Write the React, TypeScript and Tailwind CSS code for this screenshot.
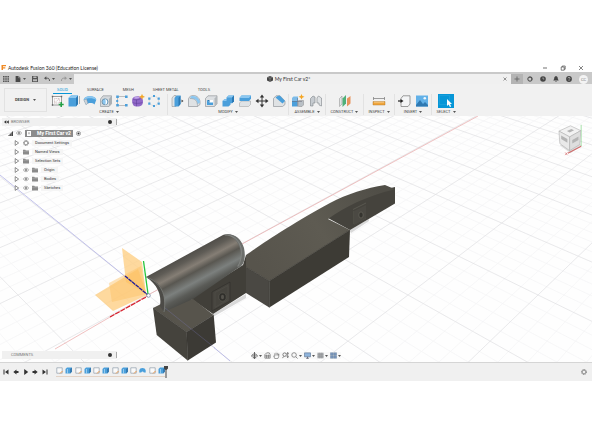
import type { ReactNode } from "react";

type IconProps = { className?: string };

const BLUE = "#4a9fdb";
const LIGHT = "#8cc7f0";

function Svg({ children, className = "size-3.5", box = "0 0 14 14" }: { children: ReactNode; className?: string; box?: string }) {
  return (
    <svg viewBox={box} className={`shrink-0 ${className}`} fill="none" aria-hidden="true">
      {children}
    </svg>
  );
}

/* ---- ribbon icons ---- */

const SketchIcon = () => (
  <Svg>
    <rect x="1.5" y="2.5" width="9" height="8.5" fill="#fafafa" stroke="#777" strokeWidth=".7" />
    <path d="M3.5 4.5h5v4.5h-5z M3.5 9l5-4.5" stroke="#a88" strokeWidth=".5" strokeDasharray="1 .7" />
    <path d="M.8 1.8h1.4v1.4H.8z M9.8 1.8h1.4v1.4H9.8z M.8 10.3h1.4v1.4H.8z" fill="#666" />
    <path d="M10.2 8v5 M7.7 10.5h5" stroke="#22a045" strokeWidth="1.6" />
  </Svg>
);
const ExtrudeIcon = () => (
  <Svg>
    <path d="M1.5 4l2.5-2.5h7V10L9 12.5H1.5z" fill={BLUE} />
    <path d="M1.5 4L4 1.5h7L9 4z" fill={LIGHT} />
    <path d="M9 4l2-2.5V10l-2 2.5z" fill="#2b79b4" />
    <path d="M12.5 2v8" stroke="#888" strokeWidth=".6" />
  </Svg>
);
const RevolveIcon = () => (
  <Svg>
    <path d="M.8 6c0-5 12.4-5 12.4 0l-1.7 4.5c-2-2-6.5-2-8.5.3z" fill={BLUE} />
    <path d="M.8 6c0-5 12.4-5 12.4 0-3-2.5-9.5-2.5-12.4 0z" fill={LIGHT} />
    <path d="M.8 6l2.2 4.800 1.800-1.500L3.500 5z" fill="#d0d5da" stroke="#888" strokeWidth=".3" />
  </Svg>
);
const HoleIcon = () => (
  <Svg>
    <path d="M1.5 5L4 1.8h8.5v8L10 12.5H1.5z" fill="#d5d9dc" stroke="#8a8f93" strokeWidth=".6" />
    <path d="M10 5l2.5-3.2v8L10 12.5z" fill="#aab0b5" />
    <circle cx="6" cy="7.8" r="3" fill={LIGHT} stroke="#5f7f95" strokeWidth=".7" />
    <path d="M6 5a3 3 0 010 5.8c1-1.8 1-4 0-5.8z" fill="#fff" />
  </Svg>
);
const PatternIcon = () => (
  <Svg>
    <path d="M11 2.5H2.500v9H11" stroke="#888" strokeWidth=".5" />
    <path d="M1.200 1.500h2.600v2.400H1.200zM1.200 10h2.600v2.400H1.200zM10 1.500h2.600v2.400H10zM10 10h2.600v2.400H10zM1.200 6h2v2h-2z" fill={BLUE} />
  </Svg>
);
const FormIcon = () => (
  <Svg>
    <path d="M1.5 4.5C3 2 8 1.5 10 3.5c2.5 1 2.5 5.5 1 7.5-2 2-7 2-8.5.5C1 9.500.8 6 1.500 4.500z" fill="#9068c8" />
    <path d="M1.8 5c2 1.2 5.5 1.2 7.7-.3M5.5 5.7v6.5M1.5 8.6c2.5 1 7 1 10 0" stroke="#5b3a94" strokeWidth=".5" />
    <path d="M2.5 4.3c2-1.6 5-1.9 6.5-.8-2 1.3-4.5 1.5-6.5.8z" fill="#c2a6e8" />
    <path d="M11 .5l.7 1.6 1.7.7-1.7.7-.7 1.6-.7-1.6-1.7-.7 1.7-.7z" fill="#f5a623" stroke="#f5a623" strokeWidth=".5" />
  </Svg>
);
const CircularIcon = () => (
  <Svg>
    <circle cx="7" cy="7" r="4.7" stroke="#999" strokeWidth=".4" strokeDasharray="1 1" />
    <path d="M6 1h2v2H6zM6 11h2v2H6zM1.200 3.500h2.200v2.200H1.200zM1.200 8.500h2.200v2.200H1.200zM10.600 3.500h2.200v2.200h-2.200zM10.600 8.500h2.200v2.200h-2.200z" fill={BLUE} />
  </Svg>
);
const PressPullIcon = () => (
  <Svg>
    <path d="M2 4l2-2.500h2V12.500H2z" fill="#dfe3e6" stroke="#888" strokeWidth=".5" />
    <path d="M4.500 4l2-2.500h4V10l-2 2.500h-4z" fill={BLUE} />
    <path d="M8.500 4l2-2.500V10l-2 2.500z" fill="#2b79b4" />
    <path d="M11.500 5.500L13.500 7l-2 1.500z" fill="#444" />
  </Svg>
);
const FilletIcon = () => (
  <Svg>
    <path d="M1.500 12.500V5C2 2.500 4 1.500 6.500 1.500 10 1.500 13 4.500 13 8v2.500l-2.500 2z" fill="#dfe2e4" stroke="#858a8e" strokeWidth=".6" />
    <path d="M4 2.300C9 .8 13 5 13 8.500l-2.500 1.800C10.500 6 8 4.500 3 4.500z" fill={LIGHT} />
    <path d="M3 4.500c5 0 7.500 2 7.500 8" stroke="#8a8f93" strokeWidth=".5" />
  </Svg>
);
const ShellIcon = () => (
  <Svg>
    <path d="M1.500 4.500L4 1.800h9v8l-2.500 2.700h-9z" fill="#dde0e3" stroke="#858a8e" strokeWidth=".6" />
    <path d="M10.500 4.500L13 1.800v8l-2.500 2.700z" fill="#b4b9bd" />
    <path d="M3 6h6v5H3z" fill="#fff" />
    <path d="M3 6l2.500 2.500V11H3zM5.500 8.500H9V11H5.500z" fill={BLUE} />
    <path d="M3 6h2.500v2.500z" fill="#2b79b4" />
  </Svg>
);
const CombineIcon = () => (
  <Svg>
    <path d="M1.500 7l2-1.800h2V3.500l2-2h5.500v5.700l-2 2H9.500v1.500l-2 1.800h-6z" fill={BLUE} />
    <path d="M5.500 3.500l2-2H13l-2 2z M1.500 7l2-1.800h2V7z" fill={LIGHT} />
    <path d="M11 3.500l2-2v5.700l-2 2z" fill="#2b79b4" />
  </Svg>
);
const SplitIcon = () => (
  <Svg>
    <path d="M1.500 9l2-2h9v3.500l-2 2h-9z" fill="#dfe3e6" stroke="#888" strokeWidth=".4" />
    <path d="M1.500 4l2-2.500h9.500v3.300l-2 2.200H1.500z" fill={BLUE} />
    <path d="M1.500 4l2-2.500h9.500l-2 2.500z" fill={LIGHT} />
  </Svg>
);
const MoveIcon = () => (
  <Svg>
    <path d="M7 2v10M2 7h10" stroke="#333" strokeWidth="1" />
    <path d="M7 .5L9.200 3.500H4.800zM7 13.500l2.200-3H4.800zM.5 7l3-2.200v4.400zM13.500 7l-3-2.200v4.400z" fill="#333" />
  </Svg>
);
const ChamferIcon = () => (
  <Svg>
    <path d="M1.500 12.500V4.500L4 1.800h4L13 7v3.500l-2.500 2z" fill="#dfe2e4" stroke="#858a8e" strokeWidth=".6" />
    <path d="M3.500 3.500L6 1.800h2L13 7l-2.500 2.500z" fill={BLUE} />
  </Svg>
);
const ComponentIcon = () => (
  <Svg>
    <path d="M1 4l1.500-1.500H7V7H1z" fill="#7dbbe8" />
    <path d="M1 7h5.500v5.500H1z" fill={BLUE} />
    <path d="M7.500 6.500h5V11L11 12.500H7.500z" fill="#b9c0c6" stroke="#777" strokeWidth=".4" />
    <path d="M6.500 4v8.500M1 7.500h10" stroke="#667" strokeWidth=".5" />
    <path d="M10.500 0l.9 1.900 2.100.9-2.100.9-.9 1.900-.9-1.900-2.100-.9 2.100-.9z" fill="#f5a623" />
  </Svg>
);
const JointIcon = () => (
  <Svg>
    <path d="M1.500 12V4.500L4 2l2 1v6H4v3z" fill="#c6cbd0" stroke="#7d8388" strokeWidth=".6" />
    <path d="M12.500 12V4L9.500 2 8 4v5h2v2z" fill="#dfe2e4" stroke="#7d8388" strokeWidth=".6" />
  </Svg>
);
const PlaneIcon = () => (
  <Svg>
    <path d="M1.500 4.500L4 2v8l-2.500 2.500z" fill="#e2e5e7" stroke="#888" strokeWidth=".5" />
    <path d="M4.500 4.500L8 1v8.500l-3.500 3.500z" fill="#4fb079" />
    <path d="M9 4.500L12.500 2v7.500L9 12.500z" fill="#e8935c" />
  </Svg>
);
const MeasureIcon = () => (
  <Svg>
    <path d="M1.500 4.500h11M1.500 3v3M12.500 3v3" stroke="#777" strokeWidth=".7" />
    <path d="M1 7.500h12v3.500H1z" fill="#f0a63c" stroke="#a66d1a" strokeWidth=".4" />
    <path d="M3 7.500V9m2-1.500V9m2-1.500V9m2-1.500V9m2-1.500V9" stroke="#fff" strokeWidth=".5" />
  </Svg>
);
const DeriveIcon = () => (
  <Svg>
    <path d="M4 4.500L6 1.800h7v8.200l-2 2.500H4z" fill="#f4f5f6" stroke="#777" strokeWidth=".7" />
    <path d="M1 7h3" stroke="#222" strokeWidth="1.200" />
    <path d="M3.500 5L6.500 7l-3 2z" fill="#222" />
  </Svg>
);
const ImageIcon = () => (
  <Svg>
    <path d="M1 1.500h12v11H1z" fill="#62b1e8" />
    <path d="M1 11l4-5 3 4 2-2 3 3v1.500H1z" fill="#2f79b2" />
    <circle cx="9.800" cy="4.300" r="1.300" fill="#eef7fd" />
  </Svg>
);
const SelectIcon = () => (
  <Svg className="h-3.5 w-4" box="0 0 16 14">
    <path d="M0 0h16v14H0z" fill="#0696d7" />
    <path d="M1.500 1.500h10v9h-10z" stroke="#4fb6e6" strokeWidth=".5" strokeDasharray="1 1" />
    <path d="M9 5v7l1.700-1.400 1.200 2.500 1.300-.6-1.200-2.500h2z" fill="#fff" />
  </Svg>
);

const groups = [
  { name: "CREATE", size: "w-[117px]", pad: "pr-1.5", icons: [SketchIcon, ExtrudeIcon, RevolveIcon, HoleIcon, PatternIcon, FormIcon, CircularIcon] },
  { name: "MODIFY", size: "w-[121px]", pad: "px-0.5", icons: [PressPullIcon, FilletIcon, ShellIcon, CombineIcon, SplitIcon, MoveIcon, ChamferIcon] },
  { name: "ASSEMBLE", size: "w-[37px]", pad: "px-0.5", icons: [ComponentIcon, JointIcon] },
  { name: "CONSTRUCT", size: "w-[38px]", pad: "px-0.5", icons: [PlaneIcon] },
  { name: "INSPECT", size: "w-[31px]", pad: "px-0.5", icons: [MeasureIcon] },
  { name: "INSERT", size: "w-[37px]", pad: "px-0.5", icons: [DeriveIcon, ImageIcon] },
  { name: "SELECT", size: "w-[28px]", pad: "px-0.5", icons: [SelectIcon] },
];

/* ---- small icons ---- */

function Caret() {
  return (
    <Svg className="h-0.5 w-[3px]" box="0 0 3 2">
      <path d="M0 0h3L1.500 2z" fill="#555" />
    </Svg>
  );
}

const GridIcon = () => (
  <Svg className="size-1.5" box="0 0 6 6">
    <path d="M0 0h1.600v1.600H0zM2.200 0h1.600v1.600H2.200zM4.400 0H6v1.600H4.400zM0 2.200h1.600v1.600H0zM2.200 2.200h1.600v1.600H2.200zM4.400 2.200H6v1.600H4.400zM0 4.400h1.600V6H0zM2.200 4.400h1.600V6H2.200zM4.400 4.400H6V6H4.400z" fill="#555" />
  </Svg>
);
const FileIcon = () => (
  <Svg className="size-1.5" box="0 0 6 6">
    <path d="M.6 0h3l1.800 1.800V6H.6z" fill="#4a4a4a" />
    <path d="M3.600 0v1.800h1.800" stroke="#ccc" strokeWidth=".4" />
  </Svg>
);
const SaveIcon = () => (
  <Svg className="size-1.5" box="0 0 6 6">
    <path d="M0 0h5.300l.7.700V6H0z" fill="#555" />
    <path d="M1.300.6h3.200v1.500H1.300zM1 3.200h4v2H1z" fill="#bbb" />
  </Svg>
);
const UndoIcon = ({ className = "" }: IconProps) => (
  <Svg className={`size-1.5 ${className}`} box="0 0 6 6">
    <path d="M1 2.200h2.500c1.400 0 2 1 2 2.800" stroke="currentColor" strokeWidth="1" />
    <path d="M0 2.200L2.300.3v3.800z" fill="currentColor" />
  </Svg>
);
const Eye = () => (
  <Svg className="size-1.5" box="0 0 6 6">
    <path d="M.3 3c1.500-2.200 3.900-2.200 5.400 0-1.500 2.200-3.900 2.200-5.400 0z" fill="#fff" stroke="#777" strokeWidth=".6" />
    <circle cx="3" cy="3" r="1" fill="#777" />
  </Svg>
);
const Folder = () => (
  <Svg className="size-1.5" box="0 0 6 6">
    <path d="M0 .8h2.300l.5.700H6v4H0z" fill="#8a8a8a" />
    <path d="M0 2.300h6" stroke="#bbb" strokeWidth=".4" />
  </Svg>
);
const Gear = ({ className = "size-1.5" }: IconProps) => (
  <Svg className={className} box="0 0 6 6">
    <circle cx="3" cy="3" r="2.500" stroke="#777" strokeWidth=".9" strokeDasharray="1.200 .76" />
    <circle cx="3" cy="3" r="1.800" stroke="#777" strokeWidth=".7" />
  </Svg>
);
const Expander = () => (
  <Svg className="size-1.5" box="0 0 6 6">
    <path d="M1.200.6L4.600 3 1.200 5.400z" fill="#fff" stroke="#444" strokeWidth=".6" />
  </Svg>
);
const PanelDot = () => (
  <span className="flex items-center gap-1">
    <span className="size-1 rounded-full bg-[#333]" />
    <span className="h-1.5 w-px bg-[#aaa]" />
  </span>
);

/* ---- chrome ---- */

function TitleBar() {
  return (
    <header className="flex h-[9px] items-center justify-between pr-2 pl-px text-[#222]">
      <div className="flex items-center gap-0.5">
        <Svg className="size-[5px]" box="0 0 5 5">
          <path d="M.5 0H5v1.300H2v.9h2.300v1.200H2V5H.5z" fill="#f08a24" />
        </Svg>
        <h1 className="font-['Lato','Liberation_Sans',sans-serif] text-[5px]/[8px] font-normal whitespace-nowrap">
          Autodesk Fusion 360 (Education License)
        </h1>
      </div>
      <div className="flex items-center gap-3">
        <button type="button" aria-label="Minimize">
          <Svg className="size-1.5" box="0 0 6 6">
            <path d="M1 3h4" stroke="#333" strokeWidth=".7" />
          </Svg>
        </button>
        <button type="button" aria-label="Restore">
          <Svg className="size-1.5" box="0 0 6 6">
            <path d="M1.200 2h3v3.200h-3zM2.200 2V1h3v3.200h-1" stroke="#333" strokeWidth=".6" />
          </Svg>
        </button>
        <button type="button" aria-label="Close">
          <Svg className="size-1.5" box="0 0 6 6">
            <path d="M1 1l4 4M5 1L1 5" stroke="#333" strokeWidth=".6" />
          </Svg>
        </button>
      </div>
    </header>
  );
}

function DocumentBar() {
  return (
    <div className="flex h-3 items-stretch border-t-2 border-[#c9c9c9] bg-[#f0f0f0]">
      <div className="flex w-[74px] items-center justify-between bg-[#c9c9c9] pr-0.5 pl-[3px] text-[#555]">
        <button type="button" aria-label="Data panel"><GridIcon /></button>
        <button type="button" aria-label="File" className="flex items-center gap-0.5"><FileIcon /><Caret /></button>
        <button type="button" aria-label="Save"><SaveIcon /></button>
        <button type="button" aria-label="Undo" className="flex items-center gap-0.5"><UndoIcon /><Caret /></button>
        <button type="button" aria-label="Redo" className="flex items-center gap-0.5 text-[#999]"><UndoIcon className="-scale-x-100" /><Caret /></button>
      </div>
      <div className="flex flex-1 items-center pr-1">
        <div className="flex flex-1 items-center justify-center gap-0.5">
          <Svg className="size-1.5" box="0 0 6 6">
            <path d="M0 1.200L3 0l3 1.200v3.200L3 6 0 4.400z" fill="#444" />
            <path d="M0 1.200l3 1 3-1M3 2.200V6" stroke="#bbb" strokeWidth=".4" />
          </Svg>
          <span className="font-['Lato','Liberation_Sans',sans-serif] text-[5px]/[8px] whitespace-nowrap text-[#333]">My First Car v2*</span>
        </div>
        <button type="button" aria-label="Close document">
          <Svg className="size-1" box="0 0 4 4">
            <path d="M.5.5l3 3M3.500.5l-3 3" stroke="#555" strokeWidth=".6" />
          </Svg>
        </button>
      </div>
      <button type="button" aria-label="New design" className="flex w-3 items-center justify-center bg-[#b4b4b4]">
        <Svg className="size-1.5" box="0 0 6 6">
          <path d="M3 .5v5M.5 3h5" stroke="#666" strokeWidth=".9" />
        </Svg>
      </button>
      <div className="flex w-[69px] items-center justify-between bg-[#c9c9c9] pr-1 pl-1">
        <button type="button" aria-label="Extensions">
          <Svg className="size-1.5" box="0 0 6 6">
            <circle cx="3" cy="3" r="2.200" stroke="#444" strokeWidth="1" />
            <path d="M2 1.500h2.500V4" stroke="#444" strokeWidth=".6" />
          </Svg>
        </button>
        <button type="button" aria-label="Job status">
          <Svg className="size-1.5" box="0 0 6 6">
            <circle cx="3" cy="3" r="2.800" fill="#444" />
            <path d="M3 1.300V3h1.300" stroke="#ccc" strokeWidth=".6" />
          </Svg>
        </button>
        <button type="button" aria-label="Notifications">
          <Svg className="size-1.5" box="0 0 6 6">
            <path d="M3 0c1.500.3 1.800 1.500 1.900 3L5.700 4.600H.3L1.100 3C1.200 1.500 1.500.3 3 0zM2.200 5h1.600L3 6z" fill="#444" />
          </Svg>
        </button>
        <button type="button" aria-label="Help">
          <Svg className="size-1.5" box="0 0 6 6">
            <circle cx="3" cy="3" r="2.900" fill="#444" />
            <path d="M2 2.300c0-1.300 2-1.300 2 0 0 .7-1 .7-1 1.400M3 4.200V5" stroke="#ddd" strokeWidth=".6" />
          </Svg>
        </button>
        <button type="button" className="size-[9px] rounded-full bg-[#f3f3f3] text-center text-[4px]/[9px] text-[#777]">CC</button>
      </div>
    </div>
  );
}

function Ribbon() {
  return (
    <div className="flex h-8 bg-[#f1f1f1] text-[#444]">
      <button type="button" className="mt-1 ml-1 flex h-6 w-[43px] shrink-0 items-center justify-center gap-1 border border-[#e2e2e2] text-[4px]/[6px] font-bold">
        DESIGN <Caret />
      </button>
      <div className="flex flex-col pl-1">
        <nav className="ml-0.5 flex gap-[11px] text-[4px]/[6px]">
          {["SOLID", "SURFACE", "MESH", "SHEET METAL", "TOOLS"].map((tab, i) => (
            <button
              key={tab}
              type="button"
              className={`h-[10px] border-b px-1 pt-0.5 whitespace-nowrap ${i === 0 ? "border-[#0696d7] text-[#0696d7]" : "border-transparent"}`}
            >
              {tab}
            </button>
          ))}
        </nav>
        <div className="flex">
          {groups.map((group) => (
            <div key={group.name} className={`flex h-[21px] flex-col border-r border-[#e2e2e2] last:border-r-0 ${group.size}`}>
              <div className={`flex ${group.pad} ${group.icons.length > 1 ? "justify-between" : "justify-center"}`}>
                {group.icons.map((Icon, i) => (
                  <button key={i} type="button" aria-label={`${group.name} ${i + 1}`}>
                    <Icon />
                  </button>
                ))}
              </div>
              <button type="button" className="flex items-center justify-center gap-0.5 text-[4px]/[7px] whitespace-nowrap">
                {group.name}
                <Caret />
              </button>
            </div>
          ))}
        </div>
      </div>
    </div>
  );
}

/* ---- viewport ---- */

// ground plane (a, b) to screen
function project(a: number, b: number) {
  const d = a - b;
  const w = 1 - 0.086 * d;
  return [(148 + 65 * (a + b) - 25 * d) / w, (295 + 16.8 * d) / w];
}

function gridPath(step: number) {
  let path = "";
  for (let i = -20; i <= 24; i += step) {
    if (step < 1 && Math.abs(i - Math.round(i)) < 0.01) continue;
    const [x1, y1] = project(i, i - 8);
    const [x2, y2] = project(i, i + 24);
    const [x3, y3] = project(i - 24, i);
    const [x4, y4] = project(i + 8, i);
    path += `M${x1} ${y1}L${x2} ${y2}M${x3} ${y3}L${x4} ${y4}`;
  }
  return path;
}

function Scene() {
  return (
    <svg viewBox="0 116 592 246" className="col-start-1 row-start-1 block w-full" fill="none" role="img" aria-label="Car body model">
      <defs>
        <linearGradient id="tube" gradientUnits="userSpaceOnUse" x1="182" y1="252" x2="206" y2="297">
          <stop offset="0" stopColor="#45433f" />
          <stop offset=".2" stopColor="#5f5c56" />
          <stop offset=".34" stopColor="#857e75" />
          <stop offset=".46" stopColor="#595751" />
          <stop offset=".64" stopColor="#7c807e" />
          <stop offset=".78" stopColor="#5a5b57" />
          <stop offset="1" stopColor="#3f3f3b" />
        </linearGradient>
        <linearGradient id="top" gradientUnits="userSpaceOnUse" x1="260" y1="270" x2="380" y2="190">
          <stop offset="0" stopColor="#57544c" />
          <stop offset=".5" stopColor="#5e5b52" />
          <stop offset="1" stopColor="#504e47" />
        </linearGradient>
      </defs>
      <path d="M0 116h592v246H0z" fill="#fefefe" />
      <path d={gridPath(0.2)} stroke="#f3f3f5" strokeWidth=".7" />
      <path d={gridPath(1)} stroke="#dfdfe2" strokeWidth=".7" />
      <path d="M55 349L148 295 478 116" stroke="#e9a7a7" strokeWidth=".7" />
      <path d="M0 175L148 295" stroke="#a9a9e4" strokeWidth=".7" />

      {/* origin planes */}
      <g fill="#fdc263" fillOpacity=".62">
        <path d="M122 248l20 14 4 32-20-12z" />
        <path d="M95 295l43-26 9 26-34 16z" />
        <path d="M109 283l32-17 5 28-34 8z" fillOpacity=".45" />
      </g>
      <path d="M125 276L148 295" stroke="#1e1b9a" strokeWidth="1.300" strokeDasharray="4 .6" />
      <path d="M110 317L148 296" stroke="#d61f2c" strokeWidth="1.200" strokeDasharray="5 1" />
      <path d="M143.500 261L148 294" stroke="#27c53c" strokeWidth="1.300" />

      {/* rear block and tail */}
      <path d="M213 314l33-20v4l-33 19z M349 230l20-11v2l-18 12z" fill="#d9d9d9" />
      <path d="M326 217C343 205 365 193 395 187v16.500L350 230z" fill="#45433d" />
      <path d="M246 255c10-7 45-31 84-52 17-9 36-15 55-18l10 4.300c-30 7-50 18-67 29.700l22 11-80.700 51L246 267z" fill="url(#top)" />
      <path d="M246 267l23.300 14v26.500L246 293z" fill="#4a4843" />
      <path d="M269.300 281L350 230l-1 27-79.700 50.500z" fill="#3d3b35" />
      <path d="M246 267l23.300 14L350 230" stroke="#34332e" strokeWidth=".6" />
      <path d="M269.300 281v26.500" stroke="#34332e" strokeWidth=".5" />
      <path d="M353 209.500l13-6.500M354 211v13l12-6" stroke="#67645c" strokeWidth=".6" />
      <path d="M354 211l12-6v13l-12 7z" fill="#4b4943" />
      <ellipse cx="361" cy="215" rx="2.200" ry="3" fill="#35342f" stroke="#77746b" strokeWidth=".5" />

      {/* side wall under the tube */}
      <path d="M190 298l53-33 3-10v38l-33 21z" fill="#413f39" />
      <path d="M212 292l18-10v19l-18 10z" fill="#46443e" stroke="#2f2e2a" strokeWidth=".6" />
      <path d="M215 292.500l13-7v14l-13 8z" stroke="#55534c" strokeWidth=".5" />
      <ellipse cx="222.500" cy="297" rx="3.700" ry="4.200" fill="#302f2b" stroke="#5d5b53" strokeWidth=".6" />
      <ellipse cx="222.500" cy="297" rx="1.500" ry="2.200" fill="#55534c" />

      {/* front block */}
      <path d="M153 308l12-6 28-3 20.500 16-26.800 17z" fill="#57544c" />
      <path d="M153 308l33.700 24 1 28.500L156.700 335z" fill="#45433d" />
      <path d="M186.700 332l27-17 2.300 27.500-28.300 18z" fill="#3c3a35" />
      <path d="M153 308l33.700 24 27-17M186.700 332l1 28.500" stroke="#34332e" strokeWidth=".5" />

      {/* tube */}
      <path d="M146 277L223 235c8-3 17 2 20 12 2 9 1 15-2 19l-48 33-29 13c2-12-2-27-18-35z" fill="url(#tube)" />
      <path d="M146 277c15 4 21 17 18 35l-4-6c2-11-3-22-14-29z" fill="#4c4b47" />
      <path d="M146 277c15 5 21 18 18 35" stroke="#848782" strokeWidth=".7" />
      <path d="M223 235c9-3 18 2 21 13 2 9 0 16-3 18-2 2-4 2-4 0 5-5 5-13 2-20-3-8-9-11-16-11z" fill="#6d6f6c" />
      <path d="M225 235c8 0 14 5 16 13 1 7 0 13-3 18" stroke="#9a9c98" strokeWidth=".5" />
      <path d="M165 308l50 40" stroke="#7f7fc8" strokeOpacity=".45" strokeWidth=".6" />
      <path d="M214 347.500L230 361" stroke="#a9a9e4" strokeWidth=".7" />
      <circle cx="148.500" cy="295.500" r="1.800" fill="#fff" stroke="#5b6a8c" strokeWidth=".6" />
    </svg>
  );
}

function ViewCube() {
  return (
    <Svg className="h-8 w-[27px]" box="0 0 30 36">
      <path d="M3 24l12 9 13-9-12-5z" fill="#ddd" />
      <path d="M27 1v24" stroke="#86d68a" strokeWidth=".8" />
      <path d="M2 8l13-6 11.500 5.500-12.500 7z" fill="#f2f2f2" stroke="#aaa" strokeWidth=".6" />
      <path d="M2 8l12 6.500V30L3 22z" fill="#e9e9e9" stroke="#aaa" strokeWidth=".6" />
      <path d="M14 14.500l12.500-7L25.500 23 14 30z" fill="#dedede" stroke="#aaa" strokeWidth=".6" />
      <path d="M4.500 13l7 4v4l-7-4z M17 18l7-4v4l-7 4z M11 8l5-2.500 3 1.500-5 2.500z" fill="#b4b4b4" />
      <path d="M27 25L12 33" stroke="#cf6b6b" strokeWidth="1.200" />
      <path d="M9 32l2.500 3M11.500 32L9 35" stroke="#d05050" strokeWidth=".6" />
    </Svg>
  );
}

const treeRows = [
  { name: "Document Settings", icon: "gear", eye: false },
  { name: "Named Views", icon: "folder", eye: false },
  { name: "Selection Sets", icon: "folder", eye: false },
  { name: "Origin", icon: "folder", eye: true },
  { name: "Bodies", icon: "folder", eye: true },
  { name: "Sketches", icon: "folder", eye: true },
];

function Browser() {
  return (
    <aside className="col-start-1 row-start-1 w-[117px] self-start pt-0.5 text-[4px]/[6px] text-[#333]">
      <div className="ml-0.5 flex h-2 items-center gap-0.5 bg-[#f0f0f0] pl-0.5 text-[#777]">
        <Svg className="h-1 w-[5px]" box="0 0 5 4">
          <path d="M0 2l2.300-1.700v3.400zM2.500 2L4.800.3v3.400z" fill="#333" />
        </Svg>
        <span className="flex-1">BROWSER</span>
        <PanelDot />
      </div>
      <div className="mt-0.5 flex h-[10px] items-center gap-[3px] pl-2">
        <Svg className="size-[5px]" box="0 0 5 5">
          <path d="M0 5L5 0v5z" fill="#444" />
          <path d="M1.700 2v3M3.300 1v4" stroke="#ddd" strokeWidth=".4" />
        </Svg>
        <Eye />
        <span className="flex h-[7px] w-12 items-center justify-between bg-[#8c8c8c] px-0.5 text-[5px]/[7px] font-bold whitespace-nowrap text-white">
          <Svg className="h-[5px] w-1" box="0 0 4 5">
            <path d="M0 0h4v5H0z" fill="#fff" />
            <path d="M1.300 1.300h1.400v2H1.300z" fill="#aaa" />
          </Svg>
          My First Car v2
        </span>
        <Svg className="size-[5px]" box="0 0 5 5">
          <circle cx="2.500" cy="2.500" r="2.100" stroke="#555" strokeWidth=".5" />
          <circle cx="2.500" cy="2.500" r="1" fill="#333" />
        </Svg>
      </div>
      <ul>
        {treeRows.map((row) => (
          <li key={row.name} className="flex h-[9px] items-center pl-3.5">
            <span className="flex items-center gap-[3px]">
              <button type="button" aria-label={`Expand ${row.name}`}><Expander /></button>
              {row.eye ? <Eye /> : null}
              {row.icon === "gear" ? <Gear /> : <Folder />}
              <span className="bg-[#f5f5f5] px-[3px] whitespace-nowrap">{row.name}</span>
            </span>
          </li>
        ))}
      </ul>
    </aside>
  );
}

const navIcons = [
  { name: "Orbit", caret: true, art: <path d="M4 0v8M0 4.500h8M1.500 3c1.500-1 3.500-1 5 0M2 6.500h4" stroke="#555" strokeWidth="1" /> },
  { name: "Look at", caret: false, art: <path d="M1 3l2-2h3l1 2v4H1zM1 4.500h6M3 3v4M5 3v4" stroke="#666" strokeWidth=".8" /> },
  { name: "Pan", caret: false, art: <path d="M2 7.500L.8 4.500l1.200.3V1.500M3.500 4V.8M5 4V1M6.500 4V2v3.500L5.500 7.500H2" stroke="#666" strokeWidth=".7" /> },
  { name: "Zoom", caret: false, art: <path d="M3 1a2 2 0 100 4 2 2 0 000-4zM2 5L.5 7M6.500 1v5M5.500 2l1-1.500 1 1.500M5.500 5l1 1.500 1-1.500" stroke="#555" strokeWidth=".8" /> },
  { name: "Fit", caret: true, art: <path d="M3.500.8a2.600 2.600 0 100 5.200 2.600 2.600 0 000-5.200zM5.500 5.500l2 2" stroke="#777" strokeWidth=".9" /> },
  { name: "Display", caret: true, art: <><path d="M.5 1h7v4.500h-7z" fill="#8fb4dc" stroke="#667c99" strokeWidth=".8" /><path d="M2.500 7.200h3M4 5.500v1.700" stroke="#556" strokeWidth=".9" /></> },
  { name: "Grid", caret: true, art: <><path d="M.5.8h7v6.400h-7z" fill="#a5a8ab" /><path d="M.5 3h7M.5 5.200h7M3 .8v6.400M5.300.8v6.400" stroke="#8a8d90" strokeWidth=".4" /></> },
  { name: "Viewports", caret: true, art: <path d="M.5.800h3.200v2.900H.5zM4.300.8h3.200v2.900H4.300zM.5 4.300h3.200v2.900H.5zM4.300 4.300h3.200v2.900H4.300z" fill="#7c98bd" stroke="#55708f" strokeWidth=".4" /> },
];

function Viewport() {
  return (
    <main className="grid">
      <Scene />
      <Browser />
      <div className="col-start-1 row-start-1 self-start justify-self-end pt-2 pr-2">
        <ViewCube />
      </div>
      <div className="col-start-1 row-start-1 mb-[3px] ml-0.5 flex h-2 w-[115px] items-center justify-between self-end bg-[#f0f0f0] pl-[9px] text-[4px]/[6px] text-[#777]">
        COMMENTS
        <PanelDot />
      </div>
      <div className="col-start-1 row-start-1 mb-[3px] flex items-center gap-0.5 self-end justify-self-center bg-[#f8f8f8]/80">
        {navIcons.map((item) => (
          <button key={item.name} type="button" aria-label={item.name} className="flex items-center gap-px">
            <Svg className="size-[7px]" box="0 0 8 8">{item.art}</Svg>
            {item.caret ? <Caret /> : null}
          </button>
        ))}
      </div>
    </main>
  );
}

/* ---- timeline ---- */

const controls = [
  { name: "First", d: "M.5.5v5H1.500v-5zM5.500.5v5L2 3z" },
  { name: "Previous", d: "M3.500.5v5L.3 3zM3.500 2h2v2h-2z" },
  { name: "Play", d: "M1.200 0l4 3-4 3z" },
  { name: "Next", d: "M2.500.5v5L5.700 3zM.5 2h2v2h-2z" },
  { name: "Last", d: "M5.500.5v5H4.500v-5zM.5.5v5L4 3z" },
];

const features = ["sketch", "extrude", "sketch", "extrude", "sketch", "extrude", "sketch", "extrude", "sketch", "revolve", "sketch", "extrude"];

function Feature({ kind }: { kind: string }) {
  return (
    <Svg className="size-[7px]" box="0 0 7 7">
      {kind === "sketch" ? (
        <>
          <path d="M.8.8h5.400v5.400H.8z" fill="#fafafa" stroke="#7d8fa0" strokeWidth=".6" />
          <path d="M4 6.500L6.500 4" stroke="#ee9a4c" strokeWidth="1" />
        </>
      ) : null}
      {kind === "extrude" ? (
        <>
          <path d="M.5 2L2 .5h4.800v4.300L5.300 6.500H.5z" fill={BLUE} />
          <path d="M5.300 2L6.800.5v4.300L5.300 6.500z" fill="#2b6da3" />
          <path d="M2.500 2v4.500" stroke="#b8dcf5" strokeWidth=".7" />
        </>
      ) : null}
      {kind === "revolve" ? <path d="M.3 3.500c.3-3.300 6-3.300 6.400 0V5.500H4.800c-.5-1.300-2-1.300-2.600 0H.3z" fill={BLUE} /> : null}
    </Svg>
  );
}

function Timeline() {
  return (
    <footer className="flex h-[19px] items-center border-t border-[#d5d5d5] bg-[#f0f0f0] pr-[5px] pl-[3px]">
      <div className="flex w-[45px] justify-between">
        {controls.map((c) => (
          <button key={c.name} type="button" aria-label={c.name}>
            <Svg className="size-1.5" box="0 0 6 6"><path d={c.d} fill="#333" /></Svg>
          </button>
        ))}
      </div>
      <div className="ml-2 flex w-[109px] justify-between border-b border-[#e3d3c6] pb-0.5">
        {features.map((kind, i) => (
          <button key={i} type="button" aria-label={`${kind} ${i + 1}`}><Feature kind={kind} /></button>
        ))}
      </div>
      <Svg className="-ml-px h-3 w-1" box="0 0 4 12">
        <path d="M0 0h4v2.500L2.500 4v8h-1V4L0 2.500z" fill="#444" />
      </Svg>
      <button type="button" aria-label="Timeline settings" className="ml-auto"><Gear /></button>
    </footer>
  );
}

export default function App() {
  return (
    <div className="flex min-h-screen flex-col justify-center bg-white font-['Roboto','Liberation_Sans',sans-serif]">
      <TitleBar />
      <DocumentBar />
      <Ribbon />
      <Viewport />
      <Timeline />
    </div>
  );
}
